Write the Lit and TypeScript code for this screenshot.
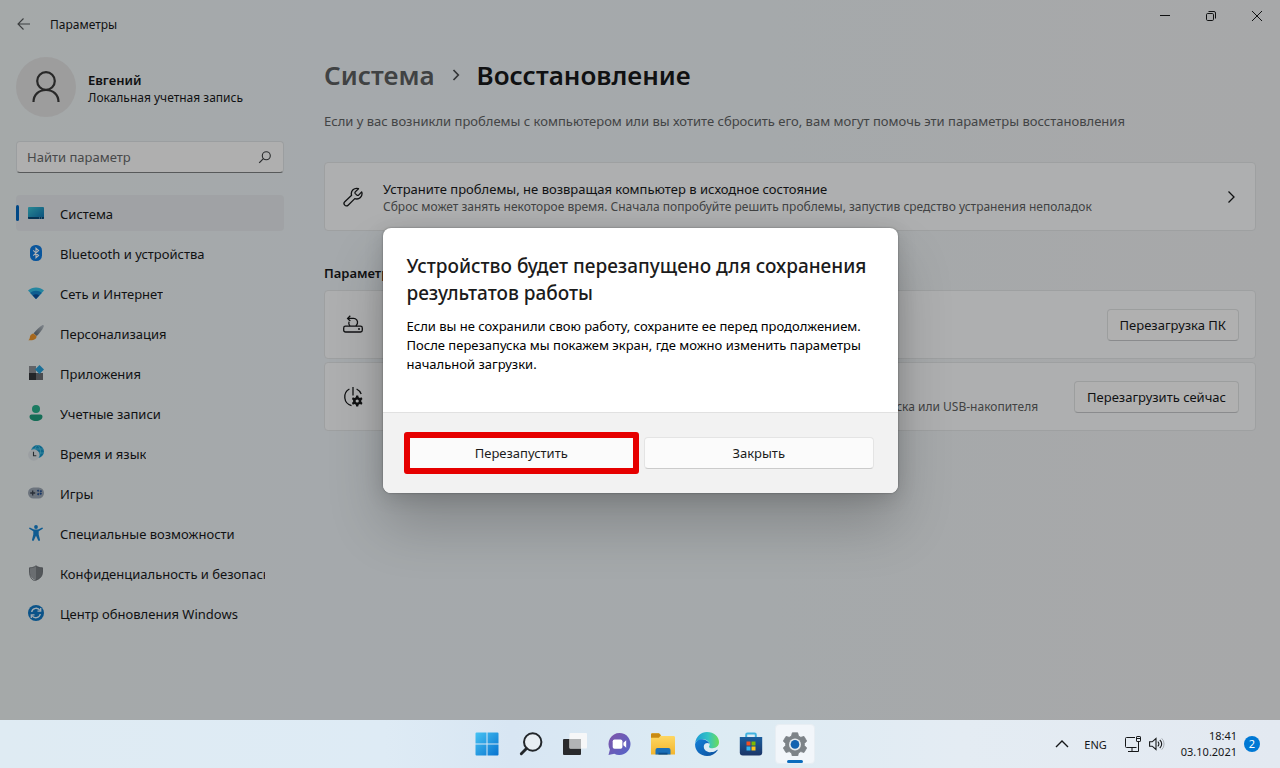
import { LitElement, html, css, svg } from "lit";
import { customElement, property } from "lit/decorators.js";
import { classMap } from "lit/directives/class-map.js";

const icons = {
  system: svg`<defs><linearGradient id="sy" x1="0" y1="0" x2="1" y2="1"><stop offset="0" stop-color="#3cc4d4"/><stop offset="1" stop-color="#0e6fb0"/></linearGradient></defs>
    <rect x="0" y="2" width="16" height="12" rx="1" fill="url(#sy)"/><path d="M0 12h16v1a1 1 0 0 1-1 1H1a1 1 0 0 1-1-1z" fill="#0b4a78"/><path d="M11 13h1M13 13h1" stroke="#9fe0f5" stroke-width=".8"/>`,
  bluetooth: svg`<rect x="2" y="0" width="12" height="16" rx="5.5" fill="#0f7be0"/><path d="M5.2 5.4l5.400 5L8 12.700V3.300l2.600 2.300-5.400 5" fill="none" stroke="#fff" stroke-width="1.100"/>`,
  network: svg`<path d="M0 5.600C4.400 1.600 11.600 1.600 16 5.600L8 14z" fill="#36c0e6"/><path d="M2.200 7.900C5.500 5 10.500 5 13.800 7.900L8 14z" fill="#1487cf"/><path d="M4.700 10.500C6.600 8.900 9.400 8.900 11.300 10.500L8 14z" fill="#0c4f9e"/>`,
  brush: svg`<defs><linearGradient id="br" x1="0" y1="1" x2="1" y2="0"><stop offset="0" stop-color="#5c6670"/><stop offset="1" stop-color="#b9c2ca"/></linearGradient></defs>
    <path d="M14.200.3c1-.6 2 .3 1.500 1.400-1.500 3.200-4.200 6.700-7 9.300L5.600 8.300C8.200 5.200 11.300 2.200 14.200.3z" fill="url(#br)"/><path d="M5.500 8.400l3 2.700c.3 3-2.500 4.700-8.200 4.100 1.600-.8 1.300-2 1.700-3.600.5-2 1.900-3.100 3.500-3.200z" fill="#f0962a"/>`,
  apps: svg`<path d="M1 1h7v7H1z" fill="#8b8f94"/><path d="M1 8h7v7H1z" fill="#33363a"/><path d="M8 8h7v7H8z" fill="#6a6e73"/><path d="M11.500 0L16 4.500 11.500 9 7 4.500z" fill="#26a0d8"/>`,
  accounts: svg`<circle cx="8" cy="4" r="4" fill="#27b08c"/><path d="M3.500 9.500h9A2 2 0 0 1 14.500 11.500C14.500 14.300 11.600 16 8 16s-6.500-1.700-6.500-4.500A2 2 0 0 1 3.500 9.500z" fill="#1f9c7c"/>`,
  time: svg`<circle cx="9.500" cy="6.500" r="6.500" fill="#1595c8"/><path d="M4 4h11M3 8h13M9.500 0c-4 4-4 9 0 13M9.500 0c4 4 4 9 0 13" stroke="#61d0ea" stroke-width=".7" fill="none"/><circle cx="5.800" cy="10" r="5.700" fill="#dfe4e8"/><path d="M5.500 6.800v4h2.800" stroke="#3a4046" stroke-width="1.100" fill="none"/>`,
  games: svg`<rect x="0" y="2.500" width="16" height="11" rx="5.500" fill="#9ba6b3"/><path d="M4.700 5.500v5M2.200 8h5" stroke="#3b4350" stroke-width="1.300"/><path d="M9.500 5l4 4.500M13.500 5.500l-4.500 5" stroke="#234f92" stroke-width="1.800" stroke-dasharray="1.800 2.200"/>`,
  access: svg`<circle cx="8" cy="2" r="1.900" fill="#1583d0"/><path d="M2.300 2.700L6 4.600h4l3.700-1.900c1-.4 1.600.9.700 1.400L10.700 6.300v3.200L12 14.800c.3 1.200-1.500 1.600-1.900.5L8 10.800l-2.100 4.500c-.4 1.100-2.200.7-1.900-.5l1.300-5.300V6.300L1.600 4.100c-.9-.5-.3-1.800.7-1.400z" fill="#1583d0"/>`,
  privacy: svg`<path d="M8 .8c2 1.500 4.300 2 6.500 2v4.400c0 3.700-2.400 6.500-6.500 8z" fill="#787d82"/><path d="M8 .8c-2 1.500-4.300 2-6.500 2v4.400c0 3.700 2.400 6.500 6.500 8z" fill="#999ea3"/><path d="M8 .8c2 1.500 4.300 2 6.500 2v4.400c0 3.700-2.400 6.500-6.500 8s-6.500-4.300-6.500-8V2.800c2.200 0 4.500-.5 6.500-2z" fill="none" stroke="#62676c" stroke-width=".8"/>`,
  update: svg`<circle cx="8" cy="8" r="8" fill="#1078c4"/><path d="M3.700 7A4.500 4.500 0 0 1 12 5.500M12.300 9A4.500 4.500 0 0 1 4 10.500" stroke="#e6f4ff" stroke-width="1.400" fill="none"/><path d="M12.700 3v3.200H9.500M3.300 13V9.800h3.200" stroke="#e6f4ff" stroke-width="1.300" fill="none"/>`,
  back: svg`<path d="M14 8H2.500M7.500 2.500L2 8l5.500 5.500" fill="none" stroke="#54585a" stroke-width="1.100"/>`,
  search: svg`<circle cx="9.300" cy="6.700" r="4" fill="none" stroke="#3c3f41" stroke-width="1.100"/><path d="M6.400 9.600L2.200 13.800" stroke="#3c3f41" stroke-width="1.200"/>`,
  chevron: svg`<path d="M5.500 2.500L11 8l-5.500 5.500" fill="none" stroke="currentColor" stroke-width="1.300"/>`,
  crumb: svg`<path d="M5.500 3L10.300 8l-4.800 5" fill="none" stroke="#4a4d4f" stroke-width="1.700"/>`,
  up: svg`<path d="M2 11l6-6 6 6" fill="none" stroke="currentColor" stroke-width="1.400"/>`,
  min: svg`<path d="M3 7.500h10" stroke="currentColor"/>`,
  restore: svg`<rect x="3.500" y="5.500" width="7" height="7" rx="1.200" fill="none" stroke="currentColor"/><path d="M5.500 3.500H11A1.500 1.500 0 0 1 12.500 5v5.500" fill="none" stroke="currentColor"/>`,
  close: svg`<path d="M3 3l10 10M13 3L3 13" stroke="currentColor" fill="none"/>`,
};

const line = {
  wrench: svg`<path d="M18.700 4.900l-3.100 3.200a1.200 1.200 0 0 1-1.700 0l-1.600-1.500a1.200 1.200 0 0 1 0-1.700L15.500 1.700A5.300 5.300 0 0 0 8.600 8.300L1.800 14.800a2.300 2.300 0 0 0 3.300 3.400l6.700-6.600A5.300 5.300 0 0 0 18.700 4.900z" fill="none" stroke="currentColor" stroke-width="1.300" stroke-linejoin="round"/>`,
  reset: svg`<rect x=".7" y="11.200" width="18.600" height="5.800" rx="1.800" fill="none" stroke="currentColor" stroke-width="1.300"/><path d="M15 14.100h2" stroke="currentColor" stroke-width="1.500"/><path d="M4.800 3.400h5.600a4 4 0 0 1 4 5.100c-.3 1-.8 1.700-1.500 2.500M7 11a4 4 0 0 1-1-4.200M7.300.7L4.600 3.400l2.700 2.600" fill="none" stroke="currentColor" stroke-width="1.300"/>`,
  startup: svg`<path d="M10 0v8.500M6.400 2A9 9 0 0 0 8.500 18.600M13.600 2a9 9 0 0 1 4.600 5" fill="none" stroke="currentColor" stroke-width="1.300"/><path d="M13.200 8.500h2l.4 1.700 1.300.7 1.600-.6 1 1.800-1.200 1.200v1.400l1.200 1.200-1 1.800-1.600-.6-1.300.7-.4 1.700h-2l-.4-1.700-1.300-.7-1.600.6-1-1.800 1.200-1.200v-1.400L8.900 12.100l1-1.800 1.600.6 1.300-.7z" fill="currentColor"/><circle cx="14.200" cy="14" r="1.600" fill="#fbfcfd"/>`,
};

const taskIcons = [
  { name: "Пуск", art: svg`<defs><linearGradient id="wi" x1="0" y1="0" x2="1" y2="1"><stop offset="0" stop-color="#47c3f3"/><stop offset="1" stop-color="#0873cf"/></linearGradient></defs><path d="M.5 1.500a1 1 0 0 1 1-1h10v11H.5zM12.500.5h10a1 1 0 0 1 1 1v10h-11zM.5 12.500h11v11h-10a1 1 0 0 1-1-1zM12.500 12.500h11v10a1 1 0 0 1-1 1h-10z" fill="url(#wi)"/>` },
  { name: "Поиск", art: svg`<circle cx="13.700" cy="10" r="8.700" fill="#e8eef3" stroke="#22262a" stroke-width="2"/><path d="M7.500 16.500L2.300 21.700" stroke="#22262a" stroke-width="2.900" stroke-linecap="round"/>` },
  { name: "Представление задач", art: svg`<rect x="0" y="7" width="18" height="16" rx="1" fill="#292a2c"/><rect x="6.500" y="1" width="17.500" height="15.500" rx="1" fill="#f6f7f8"/><path d="M6.500 7H18v9.500H6.500z" fill="#b2b4b5"/>` },
  { name: "Чат", art: svg`<defs><linearGradient id="ch" x1="0" y1="0" x2="1" y2="1"><stop offset="0" stop-color="#8055a8"/><stop offset="1" stop-color="#5364c9"/></linearGradient></defs><path d="M12.500 1a11 11 0 1 1-5.200 20.700L1.500 23l1.400-5.600A11 11 0 0 1 12.500 1z" fill="url(#ch)"/><rect x="5.700" y="7.500" width="9.700" height="9.200" rx="1.800" fill="#fff"/><path d="M16.400 10.700l2.800-2.400v7.400l-2.800-2.400z" fill="#fff"/>` },
  { name: "Проводник", art: svg`<defs><linearGradient id="fo" x1="0" y1="0" x2="0" y2="1"><stop offset="0" stop-color="#ffdc6a"/><stop offset="1" stop-color="#f3b52d"/></linearGradient></defs><path d="M0 2.500A1.300 1.300 0 0 1 1.300 1.200H8l2.500 2.800H23A1.300 1.300 0 0 1 24 5.300v17.200H0z" fill="url(#fo)"/><path d="M0 2.500A1.300 1.300 0 0 1 1.300 1.200H8l2 2-2.200 2.600H0z" fill="#c98a12"/><path d="M4.500 22.500V18a2 2 0 0 1 2-2h11a2 2 0 0 1 2 2v4.500z" fill="#1a6fb8"/><path d="M7.500 22.500v-1.800h9v1.800z" fill="#0d4d8b"/>` },
  { name: "Edge", art: svg`<defs><linearGradient id="ed" x1="0" y1="0" x2="1" y2="0"><stop offset="0" stop-color="#1d9ad6"/><stop offset=".55" stop-color="#33c4c4"/><stop offset="1" stop-color="#6bdc58"/></linearGradient><linearGradient id="eb" x1="0" y1="0" x2="1" y2="1"><stop offset="0" stop-color="#1480d8"/><stop offset="1" stop-color="#0c4f9c"/></linearGradient></defs><path d="M.2 11C1 4.500 6 0 12 0c7 0 12 4.700 12 10 0 4-3 6.200-6.400 6.200-2.700 0-4-1-3.600-1.800 1-1.400.8-2.500.3-3.500-1.200-2.500-4-4-7-3.700C4 7.500 1.500 8.800.2 11z" fill="url(#ed)"/><path d="M.1 12C.8 9 4 7 7.500 7.200c3.300.2 6 2 7 4.500-1.500-1.200-4.500-1.200-5.500 1.500-1.200 4 2.800 7.500 7.500 6.900 2.300-.3 4-1 5.400-2.200.6-.3.900.1.600.6C20.300 22 16.500 24 12 24 5 24-.4 18.500.1 12z" fill="url(#eb)"/>` },
  { name: "Store", art: svg`<defs><linearGradient id="st" x1="0" y1="0" x2="0" y2="1"><stop offset="0" stop-color="#1a5e9e"/><stop offset="1" stop-color="#1c3567"/></linearGradient></defs><path d="M7.200 6V2.700A1.200 1.200 0 0 1 8.400 1.500h7.200a1.200 1.200 0 0 1 1.200 1.200V6" fill="none" stroke="#41b3e0" stroke-width="2"/><path d="M.8 5h22.400v15.500a3 3 0 0 1-3 3H3.800a3 3 0 0 1-3-3z" fill="url(#st)"/><path d="M7.500 9.500h4v4h-4z" fill="#f25022"/><path d="M12.500 9.500h4v4h-4z" fill="#7fba00"/><path d="M7.500 14.500h4v4h-4z" fill="#34b6f2"/><path d="M12.500 14.500h4v4h-4z" fill="#ffc61a"/>` },
  { name: "Параметры", active: true, art: svg`<path d="M9.300.8h5.400l.8 3.200 2.300 1.300 3.200-.9 2.700 4.700L21.400 11.400v2.200l2.300 2.300-2.700 4.600-3.200-.9-2.300 1.300-.8 3.100H9.300l-.8-3.100-2.300-1.300-3.200.9L.3 15.900l2.300-2.300v-2.200L.3 9.100 3 4.400l3.200.9L8.500 4z" fill="#7d8388" stroke="#7d8388" stroke-width=".8" stroke-linejoin="round"/><circle cx="12" cy="12.400" r="6" fill="#e4e9ed"/><circle cx="12" cy="12.400" r="4.300" fill="#1463b0"/>` },
];

const navItems = [
  { icon: icons.system, label: "Система" },
  { icon: icons.bluetooth, label: "Bluetooth и устройства" },
  { icon: icons.network, label: "Сеть и Интернет" },
  { icon: icons.brush, label: "Персонализация" },
  { icon: icons.apps, label: "Приложения" },
  { icon: icons.accounts, label: "Учетные записи" },
  { icon: icons.time, label: "Время и язык" },
  { icon: icons.games, label: "Игры" },
  { icon: icons.access, label: "Специальные возможности" },
  { icon: icons.privacy, label: "Конфиденциальность и безопасность" },
  { icon: icons.update, label: "Центр обновления Windows" },
];

const glyph = (art: unknown, size = 16) =>
  html`<svg width=${size} height=${size} viewBox="0 0 ${size} ${size}" aria-hidden="true">${art}</svg>`;

const base = css`
  * { box-sizing: border-box; margin: 0; }
  svg { display: block; flex: none; }
  button, input { font: inherit; color: inherit; }
  a { color: inherit; text-decoration: none; }
`;

@customElement("settings-card")
class SettingsCard extends LitElement {
  @property({ attribute: false }) icon: unknown;
  @property() heading = "";
  @property() note = "";
  @property() action = "";

  static styles = [base, css`
    :host { display: block; }
    .card { display: flex; align-items: center; min-height: 69px; padding: 0 16px 0 18px; border: 1px solid #e2e5e7; border-radius: 4px; background: #fafbfc; }
    .text { flex: 1; min-width: 0; margin: 0 16px 0 20px; }
    .heading { font-size: 13px; line-height: 20px; }
    .note { font-size: 12px; line-height: 16px; color: #5d5f61; }
    .button { height: 32px; padding: 0 12px; font-size: 13px; white-space: nowrap; border: 1px solid #e0e2e3; border-bottom-color: #c6c8ca; border-radius: 4px; background: #fdfdfd; }
    .open { padding: 0; border: 0; background: none; }
  `];

  render() {
    return html`<section class="card">
      ${glyph(this.icon, 20)}
      <div class="text"><p class="heading">${this.heading}</p><p class="note">${this.note}</p></div>
      ${this.action
        ? html`<button class="button">${this.action}</button>`
        : html`<button class="open" aria-label="Открыть">${glyph(icons.chevron)}</button>`}
    </section>`;
  }
}

@customElement("side-nav")
class SideNav extends LitElement {
  static styles = [base, css`
    :host { display: block; }
    .user { display: flex; align-items: center; gap: 12px; padding-top: 9px; }
    .avatar { display: grid; place-items: center; width: 60px; height: 60px; border-radius: 50%; background: #e1e1e1; color: #3a3a3a; }
    .name { padding-top: 3px; font-size: 13px; line-height: 18px; font-weight: 600; }
    .kind { font-size: 12px; line-height: 17px; white-space: nowrap; }
    .search { display: flex; align-items: center; height: 32px; margin: 24px 0 22px; padding: 0 10px; border: 1px solid #dfe3e5; border-bottom-color: #7d8082; border-radius: 4px; background: #fbfbfb; }
    .field { flex: 1; min-width: 0; padding: 0; border: 0; outline: 0; background: none; font-size: 13px; }
    .field::placeholder { color: #66686a; opacity: 1; }
    .list { display: grid; grid-template-columns: minmax(0, 1fr); gap: 4px; padding: 0; list-style: none; }
    .item { position: relative; display: flex; align-items: center; gap: 16px; height: 36px; padding: 0 19px 0 12px; border-radius: 4px; font-size: 13px; }
    .label { padding-top: 1px; overflow: hidden; white-space: nowrap; }
    .current { background: #e5e9ec; }
    .current::before { content: ""; position: absolute; left: 0; top: 10px; width: 3px; height: 16px; border-radius: 2px; background: #0067c0; }
  `];

  render() {
    return html`
      <div class="user">
        <div class="avatar"><svg width="30" height="34" viewBox="0 0 30 34" aria-hidden="true"><circle cx="15" cy="11" r="8.800" fill="none" stroke="currentColor" stroke-width="2.200"/><path d="M2.500 32c0-7 5-12 12.500-12s12.500 5 12.500 12" fill="none" stroke="currentColor" stroke-width="2.200"/></svg></div>
        <div><p class="name">Евгений</p><p class="kind">Локальная учетная запись</p></div>
      </div>
      <label class="search"><input class="field" type="text" placeholder="Найти параметр" aria-label="Найти параметр">${glyph(icons.search)}</label>
      <nav><ul class="list">
        ${navItems.map((n, i) => html`<li><a href="#" class=${classMap({ item: true, current: i === 0 })}>${glyph(n.icon)}<span class="label">${n.label}</span></a></li>`)}
      </ul></nav>`;
  }
}

@customElement("task-bar")
class TaskBar extends LitElement {
  static styles = [base, css`
    :host { display: grid; grid-template-columns: 1fr auto 1fr; align-items: center; height: 48px; background: linear-gradient(90deg, #dfebf3, #deebf5 30%, #d8e6f3 40%, #dcebf3 55%, #e4ecf3 75%, #e3e9f1); color: #151719; }
    .apps { grid-column: 2; display: flex; gap: 4px; padding-left: 1px; }
    .app { position: relative; display: grid; place-items: center; width: 40px; height: 40px; padding: 0; border: 1px solid transparent; border-radius: 4px; background: none; }
    .app.active { background: #f2f6fa; border-color: #e8eef3; }
    .app.active::after { content: ""; position: absolute; bottom: 0; left: 11px; width: 16px; height: 3px; border-radius: 2px; background: #0a6cbd; }
    .tray { display: flex; align-items: center; justify-content: flex-end; padding-right: 20px; font-size: 11px; }
    .plain { padding: 0; border: 0; background: none; }
    .lang { margin: 0 18px 0 14px; }
    .net { display: flex; gap: 8px; margin-right: 16px; }
    .clock { line-height: 16px; text-align: right; }
    .count { display: grid; place-items: center; width: 16px; height: 16px; margin-left: 7px; border-radius: 50%; background: #0078d4; color: #fff; font-size: 11px; line-height: 16px; }
  `];

  render() {
    return html`
      <div class="apps">${taskIcons.map((t) => html`<button class=${classMap({ app: true, active: !!t.active })} aria-label=${t.name}>${glyph(t.art, 24)}</button>`)}</div>
      <div class="tray">
        <button class="plain" aria-label="Скрытые значки">${glyph(icons.up)}</button>
        <span class="lang">ENG</span>
        <div class="net">
          <svg width="16" height="16" viewBox="0 0 16 16" aria-hidden="true"><path d="M10 1.500H1.500A1 1 0 0 0 .5 2.500v8a1 1 0 0 0 1 1h10M7 12v3M3 15.500h9M13.500 6v9.500h-2" fill="none" stroke="currentColor"/><rect x="11.500" y=".5" width="4" height="5" rx=".6" fill="none" stroke="currentColor"/><path d="M12 2.500h3" stroke="currentColor"/></svg>
          <svg width="16" height="16" viewBox="0 0 16 16" aria-hidden="true"><path d="M.6 5.800h2.600L7 2.500v11L3.200 10.200H.6z" fill="none" stroke="currentColor" stroke-width="1.100"/><path d="M8.800 5.700a3 3 0 0 1 0 4.600M10.800 4a5.200 5.200 0 0 1 0 8" fill="none" stroke="currentColor" stroke-width="1.100"/><path d="M12.700 2.300a8 8 0 0 1 0 11.400" fill="none" stroke="#a9afb5"/></svg>
        </div>
        <time class="clock">18:41<br>03.10.2021</time>
        <span class="count">2</span>
      </div>`;
  }
}

@customElement("app-root")
class AppRoot extends LitElement {
  static styles = [base, css`
    :host { display: grid; grid-template-rows: 1fr auto; min-height: 100vh; font-family: "Noto Sans", "Open Sans", sans-serif; color: #17191b; }
    .window { position: relative; background: linear-gradient(90deg, #ecf2f3, #edf2f6 25%, #edf2f5 60%, #f0f1f3); }
    .bar { display: flex; align-items: center; height: 48px; padding-left: 16px; font-size: 12px; }
    .plain { padding: 0; border: 0; background: none; }
    .title { flex: 1; margin-left: 18px; padding-top: 1px; }
    .controls { display: flex; align-self: flex-start; }
    .control { display: grid; place-items: center; width: 46px; height: 32px; padding: 0; border: 0; background: none; }
    .columns { display: grid; grid-template-columns: 268px 1fr; gap: 40px; padding: 0 24px 0 16px; }
    .crumbs { display: flex; align-items: center; gap: 13px; padding-top: 7px; font-size: 26px; line-height: 40px; font-weight: 600; }
    .parent { color: #5c5f61; }
    .lead { margin: 16px 0 31px; font-size: 13px; line-height: 20px; color: #5f6264; }
    .section { margin: 32px 0 7px; font-size: 13px; line-height: 20px; font-weight: 600; }
    .stack { display: grid; gap: 3px; }
    .shade { position: absolute; inset: 0; display: grid; place-items: center; background: rgba(0, 0, 0, 0.3); }
    .dialog { position: static; width: 515px; padding: 0; border: 0; border-radius: 8px; overflow: hidden; background: #fff; color: #1b1b1b; box-shadow: 0 0 2px rgba(0, 0, 0, 0.4), 0 32px 56px rgba(0, 0, 0, 0.2), 0 4px 20px rgba(0, 0, 0, 0.14); }
    .message { padding: 25px 24px 38px; white-space: nowrap; }
    .question { font-size: 19px; line-height: 27px; font-weight: 500; }
    .detail { margin-top: 10px; font-size: 13px; line-height: 19px; color: #000; }
    .actions { display: grid; grid-template-columns: 1fr 1fr; gap: 8px; height: 81px; padding: 24px; border-top: 1px solid #e1e1e1; background: #f2f2f2; }
    .choice { position: relative; height: 32px; border: 1px solid #e4e4e4; border-bottom-color: #cbcbcb; border-radius: 4px; background: #fbfbfb; font-size: 13px; }
    .marked::after { content: ""; position: absolute; inset: -6px -4px; border: 6px solid #e60000; border-radius: 3px; }
  `];

  render() {
    return html`
      <main class="window">
        <header class="bar">
          <button class="plain" aria-label="Назад">${glyph(icons.back)}</button>
          <span class="title">Параметры</span>
          <div class="controls">
            <button class="control" aria-label="Свернуть">${glyph(icons.min)}</button>
            <button class="control" aria-label="Восстановить">${glyph(icons.restore)}</button>
            <button class="control" aria-label="Закрыть окно">${glyph(icons.close)}</button>
          </div>
        </header>
        <div class="columns">
          <side-nav></side-nav>
          <div>
            <h1 class="crumbs"><a class="parent" href="#">Система</a>${glyph(icons.crumb)}<span>Восстановление</span></h1>
            <p class="lead">Если у вас возникли проблемы с компьютером или вы хотите сбросить его, вам могут помочь эти параметры восстановления</p>
            <settings-card .icon=${line.wrench} heading="Устраните проблемы, не возвращая компьютер в исходное состояние" note="Сброс может занять некоторое время. Сначала попробуйте решить проблемы, запустив средство устранения неполадок"></settings-card>
            <h2 class="section">Параметры восстановления</h2>
            <div class="stack">
              <settings-card .icon=${line.reset} heading="Вернуть компьютер в исходное состояние" note="Сохраните или удалите личные файлы и переустановите Windows" action="Перезагрузка ПК"></settings-card>
              <settings-card .icon=${line.startup} heading="Расширенные параметры запуска" note="Перезапустите устройство, чтобы изменить параметры загрузки, включая загрузку с диска или USB-накопителя" action="Перезагрузить сейчас"></settings-card>
            </div>
          </div>
        </div>
        <div class="shade">
          <dialog class="dialog" open aria-labelledby="question">
            <div class="message">
              <h2 class="question" id="question">Устройство будет перезапущено для сохранения<br>результатов работы</h2>
              <p class="detail">Если вы не сохранили свою работу, сохраните ее перед продолжением.<br>После перезапуска мы покажем экран, где можно изменить параметры<br>начальной загрузки.</p>
            </div>
            <div class="actions">
              <button class="choice marked">Перезапустить</button>
              <button class="choice">Закрыть</button>
            </div>
          </dialog>
        </div>
      </main>
      <task-bar></task-bar>`;
  }
}
